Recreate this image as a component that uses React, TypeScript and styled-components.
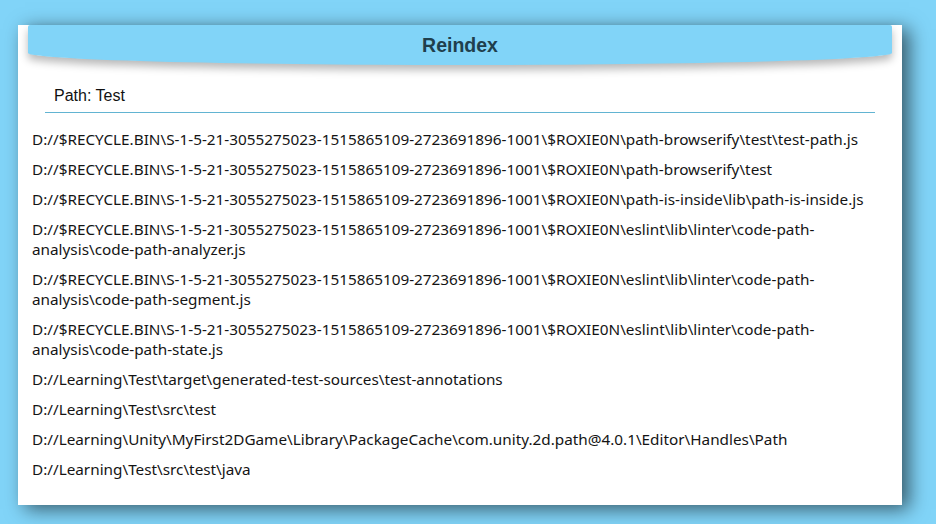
import React from "react";
import styled, { createGlobalStyle } from "styled-components";

const Global = createGlobalStyle`
  html, body { margin: 0; padding: 0; background: #81d4f8; }
  body { width: 936px; height: 524px; overflow: hidden; }
`;

const Page = styled.div`
  padding: 25px 34px 0 18px;
`;

const Card = styled.div`
  background: #ffffff;
  height: 480px;
  box-shadow: 7px 4px 18px rgba(0, 0, 0, 0.58);
  padding: 0 10px;
  box-sizing: border-box;
  display: flex;
  flex-direction: column;
`;

const Header = styled.div`
  background: #81d4f8;
  height: 40px;
  border-radius: 2px 2px 50% 50% / 2px 2px 12px 12px;
  box-shadow: 0 5px 8px rgba(0, 0, 0, 0.28);
  display: flex;
  align-items: center;
  justify-content: center;
`;

const Title = styled.h1`
  margin: 1px 0 0 0;
  font-family: "Liberation Sans", Arial, sans-serif;
  font-weight: bold;
  font-size: 19.5px;
  color: #1f3f4d;
`;

const PathBar = styled.div`
  margin: 22px 17px 0 17px;
  padding: 0 0 7px 9px;
  border-bottom: 1px solid #62b4d2;
  font-family: "Liberation Sans", Arial, sans-serif;
  font-size: 16px;
  color: #111;
  line-height: 18px;
`;

const List = styled.ul`
  list-style: none;
  margin: 16px 0 0 0;
  padding: 0 4px;
`;

const Item = styled.li`
  font-family: "Noto Sans", "Open Sans", sans-serif;
  font-size: 15.3px;
  line-height: 20px;
  color: #141414;
  max-width: 838px;
  margin-bottom: 10px;
`;

const paths = [
  "D://$RECYCLE.BIN\\S-1-5-21-3055275023-1515865109-2723691896-1001\\$ROXIE0N\\path-browserify\\test\\test-path.js",
  "D://$RECYCLE.BIN\\S-1-5-21-3055275023-1515865109-2723691896-1001\\$ROXIE0N\\path-browserify\\test",
  "D://$RECYCLE.BIN\\S-1-5-21-3055275023-1515865109-2723691896-1001\\$ROXIE0N\\path-is-inside\\lib\\path-is-inside.js",
  "D://$RECYCLE.BIN\\S-1-5-21-3055275023-1515865109-2723691896-1001\\$ROXIE0N\\eslint\\lib\\linter\\code-path-analysis\\code-path-analyzer.js",
  "D://$RECYCLE.BIN\\S-1-5-21-3055275023-1515865109-2723691896-1001\\$ROXIE0N\\eslint\\lib\\linter\\code-path-analysis\\code-path-segment.js",
  "D://$RECYCLE.BIN\\S-1-5-21-3055275023-1515865109-2723691896-1001\\$ROXIE0N\\eslint\\lib\\linter\\code-path-analysis\\code-path-state.js",
  "D://Learning\\Test\\target\\generated-test-sources\\test-annotations",
  "D://Learning\\Test\\src\\test",
  "D://Learning\\Unity\\MyFirst2DGame\\Library\\PackageCache\\com.unity.2d.path@4.0.1\\Editor\\Handles\\Path",
  "D://Learning\\Test\\src\\test\\java",
];

export default function App() {
  return (
    <>
      <Global />
      <Page>
        <Card>
          <Header>
            <Title>Reindex</Title>
          </Header>
          <PathBar>Path: Test</PathBar>
          <List>
            {paths.map((p) => (
              <Item key={p}>{p}</Item>
            ))}
          </List>
        </Card>
      </Page>
    </>
  );
}
